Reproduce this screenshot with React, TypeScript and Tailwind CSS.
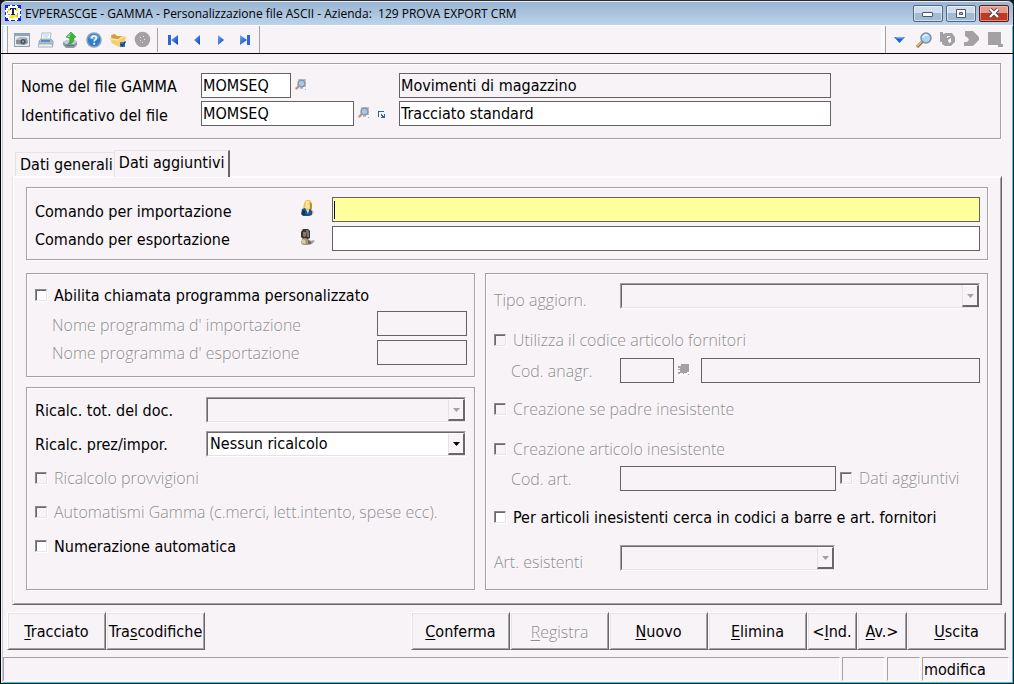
import React, { useState } from "react";

const FONT = "font-['DejaVu_Sans_Condensed','DejaVu_Sans','Noto_Sans',sans-serif]";
const ETCHED =
  "border border-[#a3a1a3] shadow-[1px_1px_0_#fff,inset_1px_1px_0_#fff]";
const DISABLED_TEXT =
  "font-['Open_Sans','Noto_Sans',sans-serif] font-light text-[#8f8d8f] [text-shadow:1px_1px_0_#fff]";
const INPUT = "h-[25px] min-w-0 border border-[#646264] px-px text-base leading-5 text-black outline-none";

/* ---------- Icons ---------- */

function AppIcon() {
  return (
    <svg width="16" height="16" viewBox="0 0 16 16" aria-hidden="true">
      <rect width="16" height="16" fill="#fff" />
      <path d="M0 0h5v1H1v4H0zM7 0h3v1H7zM12 0h4v4h-1V1h-3zM0 7h1v3H0zM15 6h1v3h-1zM0 12h1v3h3v1H0zM15 11h1v5h-4v-1h3zM6 15h4v1H6z" fill="#1818f0" />
      <path d="M1 1h2v2H1zM13 1h2v2h-2zM1 13h2v2H1zM13 13h2v2h-2z" fill="#1818f0" />
      <path d="M3 4h2v1H3zM2 6h1v2H2zM11 4h2v1h-2zM3 9h2v1H3zM12 8h1v2h-1z" fill="#8a94c8" />
      <path d="M5 10l4-1 3 2 1 2-3-1-2 2-3-1-1-1z" fill="#f4ea20" />
      <path d="M3 5l2-2h2v1H5v2H3zM11 3h2v3h-2z" fill="#f4ea20" />
      <path d="M5 3h6v2h-1V4H9v5h1v1H6V9h1V4H6v1H5z" fill="#16204a" />
      <path d="M11 10h2v2h-2z" fill="#e8c820" />
    </svg>
  );
}

function CameraIcon() {
  return (
    <svg width="16" height="16" viewBox="0 0 16 16" aria-hidden="true">
      <rect x=".5" y="1.500" width="15" height="13" fill="#e4ecf4" stroke="#8aa0b4" />
      <rect x="1" y="2" width="14" height="2" fill="#8ba7c2" />
      <path d="M2 8l4-3 7 1 1 5-4 2-8-1z" fill="#8d9092" />
      <path d="M2 8l4-3 7 1-5 2z" fill="#b9bcbe" />
      <circle cx="9" cy="9.500" r="2.500" fill="#4a5158" />
      <circle cx="9" cy="9.500" r="1" fill="#9fb6cc" />
    </svg>
  );
}

function PrinterIcon() {
  return (
    <svg width="16" height="16" viewBox="0 0 16 16" aria-hidden="true">
      <path d="M4 1h9l-1 7H3z" fill="#fff" stroke="#a9bccd" />
      <path d="M5 3h6M5 5h5" stroke="#b7cbe0" />
      <path d="M1 9l2-2h10l2 2v4H1z" fill="#b4bec8" stroke="#8d99a5" strokeWidth=".7" />
      <path d="M3 8h9v2H3z" fill="#4d8fd0" />
      <path d="M1 12h13l1 3H0z" fill="#eef3f8" stroke="#8898a8" strokeWidth=".7" />
    </svg>
  );
}

function ExportIcon() {
  return (
    <svg width="16" height="16" viewBox="0 0 16 16" aria-hidden="true">
      <path d="M1 10l4-2h8l2 2v3l-3 3H4l-3-3z" fill="#8c9aa8" />
      <path d="M1 10l4-2h8l2 2-3 2H4z" fill="#c4ced8" />
      <path d="M3 13h9v1H4z" fill="#62727f" />
      <path d="M9 0l5 5-2 1c0 4-2 6-6 6 2-2 2.500-4 1-6L4 5z" fill="#3cb43c" stroke="#249024" strokeWidth=".5" />
      <path d="M9 1.500L6 4.500h2" stroke="#9be89b" fill="none" />
    </svg>
  );
}

function HelpIcon() {
  return (
    <svg width="16" height="16" viewBox="0 0 16 16" aria-hidden="true">
      <circle cx="8" cy="8" r="7.800" fill="#8fa3b8" />
      <circle cx="8" cy="8" r="6.300" fill="#2f7fce" />
      <path d="M3 6a5.500 5.500 0 0 1 10 0c-3 2-7 2-10 0z" fill="#6fb0ea" />
      <path d="M5.800 6.300c0-3 4.600-3 4.600-.3 0 1.600-2.200 1.600-2.200 3.400" stroke="#fff" strokeWidth="1.600" fill="none" />
      <rect x="7.300" y="10.800" width="1.800" height="1.800" fill="#fff" />
    </svg>
  );
}

function FolderIcon() {
  return (
    <svg width="16" height="16" viewBox="0 0 16 16" aria-hidden="true">
      <path d="M1 3l4-1 2 2h6l1 8-4 2-8-3z" fill="#d99b3a" />
      <path d="M0 6l8 1 4-3 4 1-2 8-5 2-7-4z" fill="#f7cf72" />
      <path d="M1 7l7 1 4-3" stroke="#fff0b8" fill="none" />
      <path d="M10 10h5v5h-5z" fill="#3d78c0" />
      <path d="M10.500 12l2 2 3-4.500" stroke="#173f78" strokeWidth="1.400" fill="none" />
    </svg>
  );
}

function DiscIcon() {
  return (
    <svg width="17" height="17" viewBox="0 0 17 17" aria-hidden="true">
      <circle cx="9" cy="9" r="7.800" fill="#fff" />
      <circle cx="8.500" cy="8.500" r="7.800" fill="#a3a1a3" />
      <path d="M6 6h1v1H6zM9 5h1v1H9zM6 9h1v1H6zM10 8h1v1h-1zM8 11h1v1H8z" fill="#e9e6ea" />
    </svg>
  );
}

function NavIcon({ kind }: { kind: "first" | "prev" | "next" | "last" }) {
  const tri = {
    first: "M13 3v10L6 8z",
    prev: "M11 3v10L5 8z",
    next: "M5 3v10l6-5z",
    last: "M3 3v10l7-5z",
  }[kind];
  return (
    <svg width="16" height="16" viewBox="0 0 16 16" aria-hidden="true">
      <defs>
        <linearGradient id={`nav-${kind}`} x1="0" y1="0" x2="1" y2="1">
          <stop offset="0" stopColor="#6db4f8" />
          <stop offset="1" stopColor="#0a35b8" />
        </linearGradient>
      </defs>
      <path d={tri} fill={`url(#nav-${kind})`} />
      {kind === "first" && <rect x="3" y="3" width="3" height="10" fill="#2a68d8" />}
      {kind === "last" && <rect x="10" y="3" width="3" height="10" fill="#2a68d8" />}
    </svg>
  );
}

function DownIcon() {
  return (
    <svg width="16" height="16" viewBox="0 0 16 16" aria-hidden="true">
      <path d="M2 5h11L7.500 11z" fill="#1d5fe0" />
      <path d="M3 5h9l-1 1.500H5z" fill="#6fb0f8" />
    </svg>
  );
}

function MagnifierIcon({ small = false }: { small?: boolean }) {
  return small ? (
    <svg width="12" height="12" viewBox="0 0 12 12" aria-hidden="true">
      <path d="M3 0h8v8H8v2H5V8L1 11 0 9l2-2z" fill="#c3bec3" />
      <circle cx="6.500" cy="4.500" r="3.300" fill="#a9c6e2" stroke="#7f93ab" strokeWidth="1.200" />
      <path d="M4 7L1 10" stroke="#b69a7c" strokeWidth="1.800" />
      <rect x="10" y="10" width="1" height="1" fill="#a3a1a3" />
    </svg>
  ) : (
    <svg width="16" height="16" viewBox="0 0 16 16" aria-hidden="true">
      <path d="M6.500 9.500L1 15" stroke="#8d6a35" strokeWidth="3" />
      <path d="M6 9.500L1 14.500" stroke="#e4bd78" strokeWidth="1.500" />
      <circle cx="10" cy="6" r="5" fill="#a8d4f2" stroke="#7c8fa3" strokeWidth="1.500" />
      <path d="M7 5.500c.5-2 2.500-3 4.500-2" stroke="#eaf7ff" strokeWidth="1.500" fill="none" />
    </svg>
  );
}

function DisabledLookupIcon() {
  return (
    <svg width="12" height="12" viewBox="0 0 12 12" aria-hidden="true">
      <path d="M4 1h8v9H9v2H1v-2h1V8H1V6h1V4H1V3h3z" fill="#fff" />
      <path d="M3 0h8v8H9v1H6v1H5V9H2v1H0V8h2V6H0V5h2V4H0V2h3z" fill="#a3a1a3" />
      <rect x="10" y="10" width="1" height="1" fill="#a3a1a3" />
    </svg>
  );
}

function ExpandIcon() {
  return (
    <svg width="8" height="8" viewBox="0 0 8 8" aria-hidden="true">
      <path d="M0 0h6v1H1v5H0zM3 3h1v1h1v1h1V3h1v4H3V6h1V5H3z" fill="#2f639c" />
    </svg>
  );
}

function UndoIcon() {
  return (
    <svg width="18" height="17" viewBox="0 0 18 17" aria-hidden="true">
      <path d="M2 2h3v2l3-1h6l3 4v5l-4 4H7l-3-2v-2H2z" fill="#fff" />
      <path d="M1 1h3v2l3-1h6l3 4v5l-4 4H6l-3-2v-2H1z" fill="#a3a1a3" />
      <path d="M8 5h3v1H9v1H8zM9 9l3-2v4l-2 1z" fill="#fff" />
    </svg>
  );
}

function RedoIcon() {
  return (
    <svg width="18" height="17" viewBox="0 0 18 17" aria-hidden="true">
      <path d="M3 1h8l6 6v2l-6 7H2v-4h3l2-3-1-2-3-2z" fill="#fff" />
      <path d="M2 0h8l6 6v3l-6 6H1v-4h3l2-2-1-2-3-2z" fill="#a3a1a3" />
    </svg>
  );
}

function SheetIcon() {
  return (
    <svg width="18" height="17" viewBox="0 0 18 17" aria-hidden="true">
      <path d="M2 2h13v12h2v3h-6v-1H2z" fill="#fff" />
      <path d="M1 1h13v12h2v3h-5v-2H1z" fill="#a3a1a3" />
    </svg>
  );
}

function BlondeUserIcon() {
  return (
    <svg width="16" height="17" viewBox="0 0 16 17" aria-hidden="true">
      <path d="M9 13l3-3 2 2-2 3H6z" fill="#aeb6bc" />
      <path d="M4 3l2-3h4l2 3v5l-1 3H4l-1-2z" fill="#efc650" />
      <path d="M6 1h3v2L7 6l-1 4H5z" fill="#fdeaa0" />
      <path d="M10 2l2 2v5l-2 1z" fill="#c2902c" />
      <path d="M6.500 4h3v4L8 9 6.500 8z" fill="#f8dcb8" />
      <path d="M1 14l1-5 3-1 2 3 3-2 2 2v4l-3 1H3z" fill="#1c5488" />
      <path d="M2 13l1-3 2 1v4H3z" fill="#0e3560" />
      <path d="M6.500 10h2.500L8 14z" fill="#e8f0f8" />
    </svg>
  );
}

function DarkUserIcon() {
  return (
    <svg width="16" height="17" viewBox="0 0 16 17" aria-hidden="true">
      <path d="M8 13l5-2 2 1-3 3H6z" fill="#a9a7ab" />
      <path d="M1 3l2-3h5l2 2v7l-2 1H3L1 8z" fill="#3a3638" />
      <path d="M6 1h2l1 2v5H7z" fill="#7a7476" />
      <path d="M3 3h3v4L4.500 8 3 7z" fill="#9a725a" />
      <path d="M1 14l1-4 3-1 3 1 3 2 1 3-4 1H3z" fill="#a4947a" />
      <path d="M2 11l2-1 2 3-1 2-3-1z" fill="#d9cbb0" />
      <path d="M8 11l3 2v2H8z" fill="#6f6656" />
    </svg>
  );
}

/* ---------- Form parts ---------- */

function Check({ id, label, disabled = false }: { id: string; label: string; disabled?: boolean }) {
  return (
    <div className="flex items-center gap-[7px]">
      <input
        id={id}
        type="checkbox"
        disabled={disabled}
        className="size-3 shrink-0 appearance-none border border-t-[#8a888a] border-r-[#e8e4e8] border-b-[#e8e4e8] border-l-[#8a888a] bg-white shadow-[inset_1px_1px_0_#6a686a,1px_1px_0_#fff] checked:bg-[#333] disabled:bg-[#f7f3f7]"
      />
      <label htmlFor={id} className={`whitespace-nowrap ${disabled ? DISABLED_TEXT : "pt-px text-black"}`}>
        {label}
      </label>
    </div>
  );
}

function Combo({
  id,
  options = [],
  disabled = false,
  className = "",
}: {
  id: string;
  options?: string[];
  disabled?: boolean;
  className?: string;
}) {
  return (
    <div
      className={`relative h-[26px] min-w-0 border border-t-[#a09ea0] border-r-white border-b-white border-l-[#a09ea0] ${className}`}
    >
      <select
        id={id}
        disabled={disabled}
        className="block h-6 w-full appearance-none border border-t-[#696769] border-r-[#e6e2e6] border-b-[#e6e2e6] border-l-[#696769] bg-white pr-5 pl-[2px] text-base leading-5 text-black opacity-100 outline-none disabled:bg-[#f7f3f7]"
      >
        {options.map((o) => (
          <option key={o}>{o}</option>
        ))}
      </select>
      <span className="pointer-events-none absolute top-px right-0 bottom-px flex w-[17px] items-center justify-center border-t border-r-2 border-b-2 border-l border-t-white border-r-[#696769] border-b-[#696769] border-l-[#e6e2e6] bg-[#f7f3f7]">
        <svg width="7" height="4" viewBox="0 0 7 4" aria-hidden="true">
          <path d="M0 0h7L3.500 4z" fill={disabled ? "#a3a1a3" : "#000"} />
        </svg>
      </span>
    </div>
  );
}

function CommandButton({
  pre = "",
  accel,
  post,
  disabled = false,
  narrow = false,
}: {
  pre?: string;
  accel: string;
  post: string;
  disabled?: boolean;
  narrow?: boolean;
}) {
  return (
    <button
      type="button"
      disabled={disabled}
      className={`h-[38px] border border-t-white border-r-[#696769] border-b-[#696769] border-l-white bg-[#f7f3f7] pt-px whitespace-nowrap shadow-[inset_1px_1px_0_#e6e2e6,inset_-1px_-1px_0_#a3a1a3] ${
        narrow ? "w-[50px]" : "w-[99px]"
      } ${disabled ? DISABLED_TEXT : "text-black"}`}
    >
      {pre}
      <span className="underline underline-offset-2">{accel}</span>
      {post}
    </button>
  );
}

function ToolButton({ label, disabled = false, children }: { label: string; disabled?: boolean; children: React.ReactNode }) {
  return (
    <button type="button" aria-label={label} disabled={disabled} className="flex h-6 w-6 items-center justify-center">
      {children}
    </button>
  );
}

function Grip() {
  return <span className="mr-[2px] w-[3px] self-stretch border-r border-l border-r-[#a3a1a3] border-l-white" />;
}

/* ---------- Window ---------- */

function TitleBar() {
  const frame =
    "flex h-[17px] w-[30px] items-center justify-center rounded-[2px] border border-[#53687f] bg-linear-to-b from-[#cfdeee] from-45% to-[#a3bad4] to-50% shadow-[inset_0_0_0_1px_rgba(255,255,255,0.5)]";
  return (
    <header className="flex h-[26px] items-center gap-1 rounded-t-md border-t border-b border-t-[#2a2a30] border-b-white bg-linear-to-b from-[#98b3d0] to-[#bcd3eb] pl-1 shadow-[inset_0_1px_0_#e8f0f8]">
      <AppIcon />
      <h1 className="grow truncate pt-px font-['Open_Sans','Noto_Sans',sans-serif] text-xs whitespace-pre text-black">
        {"EVPERASCGE - GAMMA - Personalizzazione file ASCII - Azienda:  129 PROVA EXPORT CRM"}
      </h1>
      <div className="flex gap-[3px] pr-1">
        <button type="button" aria-label="Riduci a icona" className={frame}>
          <svg width="12" height="10" viewBox="0 0 12 10" aria-hidden="true">
            <rect x=".5" y="4.500" width="10" height="4" rx=".5" fill="#fff" stroke="#4c5666" />
          </svg>
        </button>
        <button type="button" aria-label="Ingrandisci" className={frame}>
          <svg width="10" height="9" viewBox="0 0 10 9" aria-hidden="true">
            <path d="M.5.500h9v8h-9zM3.500 3.500v2h3v-2z" fill="#fff" fillRule="evenodd" stroke="#4c5666" />
          </svg>
        </button>
        <button
          type="button"
          aria-label="Chiudi"
          className="flex h-[17px] w-[30px] items-center justify-center rounded-[2px] border border-[#5c1a1a] bg-linear-to-b from-[#e39c8c] from-45% to-[#bf3a22] to-50% shadow-[inset_0_0_0_1px_rgba(255,220,210,0.5)]"
        >
          <svg width="12" height="10" viewBox="0 0 12 10" aria-hidden="true">
            <path d="M2 1l8 8M10 1L2 9" stroke="#4c4454" strokeWidth="4" />
            <path d="M2 1l8 8M10 1L2 9" stroke="#fff" strokeWidth="2.200" />
          </svg>
        </button>
      </div>
    </header>
  );
}

function Toolbar() {
  return (
    <div className="flex h-7 justify-between border-b border-black pl-1">
      <div className="flex items-center border-r border-[#a3a1a3]">
        <Grip />
        <ToolButton label="Cattura"><CameraIcon /></ToolButton>
        <ToolButton label="Stampa"><PrinterIcon /></ToolButton>
        <ToolButton label="Esporta"><ExportIcon /></ToolButton>
        <ToolButton label="Guida"><HelpIcon /></ToolButton>
        <ToolButton label="Apri"><FolderIcon /></ToolButton>
        <ToolButton label="Stato" disabled><DiscIcon /></ToolButton>
        <span className="mx-[3px] h-6 w-px bg-[#a3a1a3]" />
        <ToolButton label="Primo"><NavIcon kind="first" /></ToolButton>
        <ToolButton label="Precedente"><NavIcon kind="prev" /></ToolButton>
        <ToolButton label="Successivo"><NavIcon kind="next" /></ToolButton>
        <ToolButton label="Ultimo"><NavIcon kind="last" /></ToolButton>
        <span className="w-[2px]" />
      </div>
      <div className="flex items-center border-l border-white pr-[5px] pl-px">
        <Grip />
        <ToolButton label="Menu"><DownIcon /></ToolButton>
        <ToolButton label="Cerca"><MagnifierIcon /></ToolButton>
        <ToolButton label="Annulla" disabled><UndoIcon /></ToolButton>
        <ToolButton label="Ripeti" disabled><RedoIcon /></ToolButton>
        <ToolButton label="Foglio" disabled><SheetIcon /></ToolButton>
      </div>
    </div>
  );
}

function FileHeader() {
  return (
    <section className={`mr-px flex flex-col gap-[3px] pt-[9px] pr-[169px] pb-3 pl-2 ${ETCHED}`}>
      <div className="flex">
        <label htmlFor="nome-file" className="w-[180px] pt-1">Nome del file GAMMA</label>
        <div className="flex w-[198px] gap-1">
          <input id="nome-file" defaultValue="MOMSEQ" className={`${INPUT} w-[90px] bg-white`} />
          <button type="button" aria-label="Cerca file" className="flex pt-[6px]"><MagnifierIcon small /></button>
        </div>
        <input aria-label="Descrizione file" readOnly defaultValue="Movimenti di magazzino" className={`${INPUT} grow bg-[#f7f3f7]`} />
      </div>
      <div className="flex">
        <label htmlFor="id-file" className="w-[180px] pt-[5px]">Identificativo del file</label>
        <div className="flex w-[198px] gap-1">
          <input id="id-file" defaultValue="MOMSEQ" className={`${INPUT} w-[153px] bg-white`} />
          <button type="button" aria-label="Cerca identificativo" className="flex pt-[6px]"><MagnifierIcon small /></button>
          <button type="button" aria-label="Espandi" className="flex pt-[10px] pl-1"><ExpandIcon /></button>
        </div>
        <input aria-label="Descrizione identificativo" defaultValue="Tracciato standard" className={`${INPUT} grow bg-white`} />
      </div>
    </section>
  );
}

function Commands() {
  return (
    <section className={`flex flex-col gap-1 pt-[9px] pr-[7px] pb-2 pl-2 ${ETCHED}`}>
      <div className="flex">
        <label htmlFor="cmd-imp" className="w-[265px] pt-[5px]">Comando per importazione</label>
        <span className="w-8 pt-[3px]"><BlondeUserIcon /></span>
        <div className="flex h-[25px] min-w-0 grow items-center border border-[#646264] bg-[#ffff9c] pl-px">
          <span className="h-[18px] w-px bg-[#101040]" />
          <input id="cmd-imp" className="h-full min-w-0 grow bg-transparent text-base outline-none" />
        </div>
      </div>
      <div className="flex">
        <label htmlFor="cmd-esp" className="w-[265px] pt-1">Comando per esportazione</label>
        <span className="w-8 pt-[3px]"><DarkUserIcon /></span>
        <input id="cmd-esp" className={`${INPUT} grow bg-white`} />
      </div>
    </section>
  );
}

function CustomProgram() {
  return (
    <section className={`pt-2 pr-[7px] pb-[11px] pl-2 ${ETCHED}`}>
      <div className="flex h-[26px] items-center">
        <Check id="abilita" label="Abilita chiamata programma personalizzato" />
      </div>
      <div className="mt-[3px] flex items-center justify-between pl-[17px]">
        <label htmlFor="prog-imp" className={`pt-[2px] ${DISABLED_TEXT}`}>Nome programma d' importazione</label>
        <input id="prog-imp" disabled className={`${INPUT} w-[90px]`} />
      </div>
      <div className="mt-1 flex items-center justify-between pl-[17px]">
        <label htmlFor="prog-esp" className={DISABLED_TEXT}>Nome programma d' esportazione</label>
        <input id="prog-esp" disabled className={`${INPUT} w-[90px]`} />
      </div>
    </section>
  );
}

function Recalculation() {
  const row = "flex h-[34px] items-center";
  return (
    <section className={`grow pt-[5px] pr-2 pb-[26px] pl-2 ${ETCHED}`}>
      <div className={row}>
        <label htmlFor="ric-tot" className="w-[171px] pt-[2px]">Ricalc. tot. del doc.</label>
        <Combo id="ric-tot" disabled className="grow" />
      </div>
      <div className={row}>
        <label htmlFor="ric-prez" className="w-[171px] pt-[2px]">Ricalc. prez/impor.</label>
        <Combo id="ric-prez" options={["Nessun ricalcolo", "Ricalcolo"]} className="grow" />
      </div>
      <div className={row}><Check id="provv" label="Ricalcolo provvigioni" disabled /></div>
      <div className={row}>
        <Check id="autom" label="Automatismi Gamma (c.merci, lett.intento, spese ecc)." disabled />
      </div>
      <div className={row}><Check id="numer" label="Numerazione automatica" /></div>
    </section>
  );
}

function Articles() {
  const row = "flex h-[26px] items-center";
  return (
    <section className={`pt-[9px] pr-[7px] pb-2 pl-2 ${ETCHED}`}>
      <div className={row}>
        <label htmlFor="tipo" className={`w-[126px] pt-2 ${DISABLED_TEXT}`}>Tipo aggiorn.</label>
        <Combo id="tipo" disabled className="grow" />
      </div>
      <div className={`mt-[18px] ${row}`}>
        <Check id="cod-forn" label="Utilizza il codice articolo fornitori" disabled />
      </div>
      <div className={`mt-1 ${row}`}>
        <label htmlFor="anagr" className={`w-[126px] pt-[2px] pl-[17px] ${DISABLED_TEXT}`}>Cod. anagr.</label>
        <input id="anagr" disabled className={`${INPUT} w-[54px]`} />
        <span className="w-[27px] pl-1"><DisabledLookupIcon /></span>
        <input aria-label="Descrizione anagrafica" disabled className={`${INPUT} grow`} />
      </div>
      <div className={`mt-[13px] ${row}`}>
        <Check id="padre" label="Creazione se padre inesistente" disabled />
      </div>
      <div className={`mt-[14px] ${row}`}>
        <Check id="art-in" label="Creazione articolo inesistente" disabled />
      </div>
      <div className={`mt-[3px] ${row}`}>
        <label htmlFor="cod-art" className={`w-[126px] pt-[2px] pl-[17px] ${DISABLED_TEXT}`}>Cod. art.</label>
        <input id="cod-art" disabled className={`${INPUT} mr-1 w-[216px]`} />
        <Check id="dati-agg" label="Dati aggiuntivi" disabled />
      </div>
      <div className={`mt-[13px] ${row}`}>
        <Check id="barre" label="Per articoli inesistenti cerca in codici a barre e art. fornitori" />
      </div>
      <div className={`mt-[15px] ${row}`}>
        <label htmlFor="art-es" className={`w-[126px] pt-2 ${DISABLED_TEXT}`}>Art. esistenti</label>
        <Combo id="art-es" disabled className="w-[215px]" />
      </div>
    </section>
  );
}

export default function App() {
  const [tab, setTab] = useState(1);
  const tabs = ["Dati generali", "Dati aggiuntivi"];
  return (
    <div className={`bg-[#17181c] ${FONT} text-base leading-5 text-black`}>
      <div className="flex min-h-screen flex-col rounded-t-lg border-x border-b border-r-[#17181c] border-b-[#17181c] border-l-black bg-[#f7f3f7] shadow-[inset_1px_0_0_#f7f3f7,inset_2px_0_0_#b4cdea,inset_-1px_0_0_#35c8ee,inset_0_-1px_0_#35c8ee]">
        <TitleBar />
        <Toolbar />
        <main className="flex grow flex-col pt-[9px] pr-[11px] pl-[11px]">
          <FileHeader />
          <div role="tablist" className="z-10 mt-[11px] flex items-end pl-[3px]">
            {tabs.map((t, i) => (
              <button
                key={t}
                type="button"
                role="tab"
                aria-selected={tab === i}
                onClick={() => setTab(i)}
                className={
                  tab === i
                    ? "-mb-px h-[27px] border-t border-r-2 border-l border-t-[#e6e2e6] border-r-[#696769] border-l-[#e6e2e6] bg-[#f7f3f7] px-1 pb-[2px] whitespace-nowrap"
                    : "h-6 border-t border-l border-[#e6e2e6] pr-px pl-1 whitespace-nowrap"
                }
              >
                {t}
              </button>
            ))}
          </div>
          <div
            role="tabpanel"
            className="flex grow flex-col border border-t-white border-r-[#696769] border-b-[#696769] border-l-[#e6e2e6] px-[13px] pt-[10px] pb-[14px] shadow-[inset_1px_1px_0_#fff,inset_-1px_-1px_0_#a3a1a3]"
          >
            <Commands />
            <div className="mt-[13px] grid grow grid-cols-[449fr_503fr] gap-[10px]">
              <div className="flex flex-col gap-[10px]">
                <CustomProgram />
                <Recalculation />
              </div>
              <Articles />
            </div>
          </div>
        </main>
        <footer className="pt-[7px] pb-[2px]">
          <div className="flex justify-between pr-[7px] pl-[6px]">
            <div className="flex">
              <CommandButton accel="T" post="racciato" />
              <CommandButton pre="Tra" accel="s" post="codifiche" />
            </div>
            <div className="flex">
              <CommandButton accel="C" post="onferma" />
              <CommandButton accel="R" post="egistra" disabled />
              <CommandButton accel="N" post="uovo" />
              <CommandButton accel="E" post="limina" />
              <CommandButton pre="<" accel="I" post="nd." narrow />
              <CommandButton accel="A" post="v.>" narrow />
              <CommandButton accel="U" post="scita" />
            </div>
          </div>
          <div className="mt-[7px] flex h-6 gap-[2px] pr-1 pl-[2px] [&>*]:border [&>*]:border-t-[#a3a1a3] [&>*]:border-r-white [&>*]:border-b-white [&>*]:border-l-[#a3a1a3]">
            <div className="grow" />
            <div className="w-[43px]" />
            <div className="w-[33px]" />
            <div className="w-[87px] pt-[2px] pl-px">modifica</div>
          </div>
        </footer>
      </div>
    </div>
  );
}
